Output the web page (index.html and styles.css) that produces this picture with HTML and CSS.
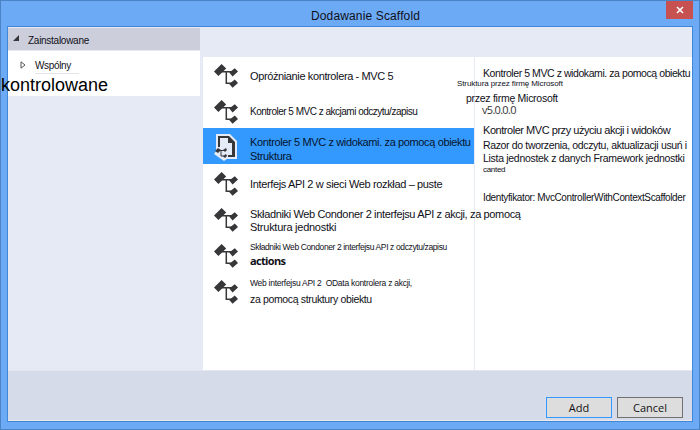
FILE: index.html
```
<!DOCTYPE html>
<html lang="pl">
<head>
<meta charset="utf-8">
<title>Dodawanie Scaffold</title>
<link rel="stylesheet" href="styles.css">
</head>
<body>
<svg class="defs" width="0" height="0">
  <symbol id="controller" viewBox="0 0 24 24">
    <path class="dark" d="M0 7.600 7.600 0l4.600 4.400L4.400 12zM15.200 8.600l5.600-4.400 3.200 3.400-5.400 4.800zM15.200 20l5.600-4.400L24 19l-5.400 4.800z"/>
    <path class="wire" d="M8 7.800h10M12.300 7v12.300H18"/>
  </symbol>
  <symbol id="document" viewBox="0 0 24 27">
    <path class="pale" d="M2 0h14l7 7v18H13l-3 2-10-7 2-3z"/>
    <path class="dark" d="M4 2h11l6 6v15h-7v-2h4V9h-4V4H6v9H4z"/>
    <path class="dark" d="m1 17 3-3 3 2-3 3zM9 16l3-2 1 2-2 2zM9 22l3-2 1 2-2 2z"/>
    <path class="thin" d="M5 16.500h5M7 16v6h3"/>
  </symbol>
</svg>
<div class="window">
  <header class="titlebar">
    <h1 class="title">Dodawanie Scaffold</h1>
    <button class="close" aria-label="Zamknij"><svg width="8" height="8" viewBox="0 0 8 8"><path d="M1 1l6 6M7 1 1 7"/></svg></button>
  </header>
  <div class="client">
    <div class="main">
      <nav class="side">
        <div class="group"><svg width="7" height="6" viewBox="0 0 7 6"><path class="dark" d="M6 0v6H0z"/></svg><span class="t-group">Zainstalowane</span></div>
        <div class="tree">
          <div class="node"><svg width="6" height="8" viewBox="0 0 6 8"><path class="arrow" d="M1 .8v6.400l4-3.200z"/></svg><span class="t-node">Wspólny</span></div>
          <div class="t-big">kontrolowane</div>
        </div>
      </nav>
      <div class="panes">
        <ul class="list">
          <li class="row first"><svg class="icon"><use href="#controller"/></svg><div class="label"><p class="a1">Opróżnianie kontrolera - MVC 5</p></div></li>
          <li class="row"><svg class="icon"><use href="#controller"/></svg><div class="label"><p class="a2">Kontroler 5 MVC z akcjami odczytu/zapisu</p></div></li>
          <li class="row selected"><svg class="icon doc"><use href="#document"/></svg><div class="label"><p class="a3">Kontroler 5 MVC z widokami. za pomocą obiektu</p><p class="a4">Struktura</p></div></li>
          <li class="row"><svg class="icon"><use href="#controller"/></svg><div class="label"><p class="a5">Interfejs API 2 w sieci Web rozkład – puste</p></div></li>
          <li class="row"><svg class="icon"><use href="#controller"/></svg><div class="label"><p class="a6">Składniki Web Condoner 2 interfejsu API z akcji, za pomocą</p><p class="a7">Struktura jednostki</p></div></li>
          <li class="row"><svg class="icon"><use href="#controller"/></svg><div class="label"><p class="a8">Składniki Web Condoner 2 interfejsu API z odczytu/zapisu</p><p class="a9">actions</p></div></li>
          <li class="row"><svg class="icon"><use href="#controller"/></svg><div class="label"><p class="a10">Web interfejsu API 2&nbsp; OData kontrolera z akcji,</p><p class="a11">za pomocą struktury obiektu</p></div></li>
        </ul>
        <section class="details">
          <p class="d1">Kontroler 5 MVC z widokami. za pomocą obiektu</p>
          <p class="d2">Struktura przez firmę Microsoft</p>
          <p class="d3">przez firmę Microsoft</p>
          <p class="d4">v5.0.0.0</p>
          <p class="d5">Kontroler MVC przy użyciu akcji i widoków</p>
          <p class="d6">Razor do tworzenia, odczytu, aktualizacji usuń i</p>
          <p class="d7">Lista jednostek z danych Framework jednostki</p>
          <p class="d8">canted</p>
          <p class="d9">Identyfikator: MvcControllerWithContextScaffolder</p>
        </section>
      </div>
    </div>
    <footer class="footer"><button class="btn primary">Add</button><button class="btn">Cancel</button></footer>
  </div>
</div>
</body>
</html>
```
FILE: styles.css
```
* { box-sizing: border-box; margin: 0; padding: 0; }
body { width: 700px; height: 430px; overflow: hidden; font: 11px/14px "Liberation Sans", Arial, sans-serif; color: #101018; }
p, span, h1, .t-big { white-space: nowrap; }
.defs { display: block; height: 0; }
.dark { fill: #37373a; }
.pale { fill: #e4eaf6; }
.wire { fill: none; stroke: #37373a; stroke-width: 1.500; }
.thin { fill: none; stroke: #37373a; stroke-width: 1; }
.arrow { fill: #fff; stroke: #555; stroke-width: 1; }

.window { height: 430px; border: 1px solid #4b84c4; background: #6daaf5; padding: 0 6px 7px; display: flex; flex-direction: column; }
.titlebar { height: 25px; flex: none; display: flex; justify-content: space-between; }
.title { margin-left: 304px; margin-top: 7px; font-size: 12px; line-height: 16px; font-weight: normal; letter-spacing: 0.140px; }
.close { width: 27px; height: 18px; border: 0; background: #c75050; display: flex; align-items: center; justify-content: center; }
.close path { fill: none; stroke: #fff; stroke-width: 1.600; }

.client { flex: 1; border: 1px solid #3f87d9; display: flex; flex-direction: column; min-height: 0; }
.main { flex: 1; background: #e6eaf5; display: flex; min-height: 0; }
.side { width: 192px; margin-right: 3px; flex: none; padding-top: 1px; }
.group { height: 22px; background: #cccedb; display: flex; align-items: center; padding-left: 5px; gap: 8px; }
.group svg { margin-top: -3px; }
.tree { height: 45px; margin-top: 1px; background: #fff; }
.node { height: 23px; display: flex; align-items: center; padding: 8px 0 0 12px; gap: 9px; }
.node svg { margin-top: -3px; }
.t-group { font-size: 10px; margin-top: 3px; letter-spacing: -0.270px; }
.t-node { font-size: 10px; border-bottom: 1px solid #e4e4ea; letter-spacing: -0.350px; padding-right: 8px; }
.t-big { font-size: 18px; line-height: 20px; margin: 1px 0 0 -7px; color: #000; }

.panes { flex: 1; margin-top: 30px; background: #fff; display: flex; min-width: 0; }
.list { width: 272px; flex: none; list-style: none; border-right: 1px solid #e6eaf5; }
.row { height: 36px; display: flex; padding-left: 11px; }
.row.first { height: 35px; }
.row.first .icon { margin-top: 7px; }
.row.first .label { margin-top: -1px; }
.selected { background: #3399ff; color: #06142c; }
.icon { width: 24px; height: 24px; margin-top: 8px; flex: none; }
.icon.doc { height: 27px; margin-top: 6px; }
.label { margin-left: 12px; }
.label p { height: 14px; }

.a1 { margin-top: 13px; letter-spacing: -0.380px; }
.a2 { margin-top: 13px; font-size: 10px; letter-spacing: -0.500px; }
.a3 { margin-top: 7px; letter-spacing: -0.370px; }
.a4 { letter-spacing: -0.350px; }
.a5 { margin-top: 13px; letter-spacing: -0.360px; }
.a6 { margin-top: 7px; letter-spacing: -0.360px; }
.a7 { margin-top: -1px; letter-spacing: -0.260px; }
.a8 { margin-top: 4px; font-size: 8.500px; letter-spacing: -0.380px; }
.a9 { font-family: "Open Sans", sans-serif; font-weight: 700; letter-spacing: -0.650px; }
.a10 { margin-top: 4px; font-size: 8.500px; letter-spacing: -0.270px; }
.a11 { margin-top: 2px; font-size: 10.500px; letter-spacing: -0.350px; }

.details { padding-left: 8px; }
.d1 { margin-top: 9px; font-size: 10.500px; letter-spacing: -0.430px; }
.d2 { font-size: 8px; line-height: 8px; margin-left: -26px; letter-spacing: -0.100px; }
.d3 { margin: 3px 0 0 -17px; line-height: 15px; font-size: 10.500px; letter-spacing: -0.270px; }
.d4 { font: 11px/12px "Open Sans", sans-serif; color: #333; margin: -2px 0 0 -1px; letter-spacing: -0.700px; }
.d5 { margin-top: 7px; letter-spacing: -0.460px; }
.d6 { margin-top: 1px; font-size: 10.500px; letter-spacing: -0.350px; }
.d7 { margin-top: -1px; font-size: 10.500px; letter-spacing: -0.300px; }
.d8 { font-size: 8px; line-height: 10px; letter-spacing: -0.300px; }
.d9 { margin-top: 16px; font-size: 10px; letter-spacing: -0.380px; }

.footer { height: 51px; flex: none; background: #d6dbe9; border-top: 1px solid #e3e6ef; border-bottom: 1px solid #ece8ec; display: flex; justify-content: flex-end; gap: 5px; padding: 26px 9px 0 0; }
.btn { width: 66px; height: 21px; border: 1px solid #707070; background: #ddd; font: 11px/16px "Open Sans", sans-serif; color: #111; }
.btn.primary { border-color: #3399ff; }
```
